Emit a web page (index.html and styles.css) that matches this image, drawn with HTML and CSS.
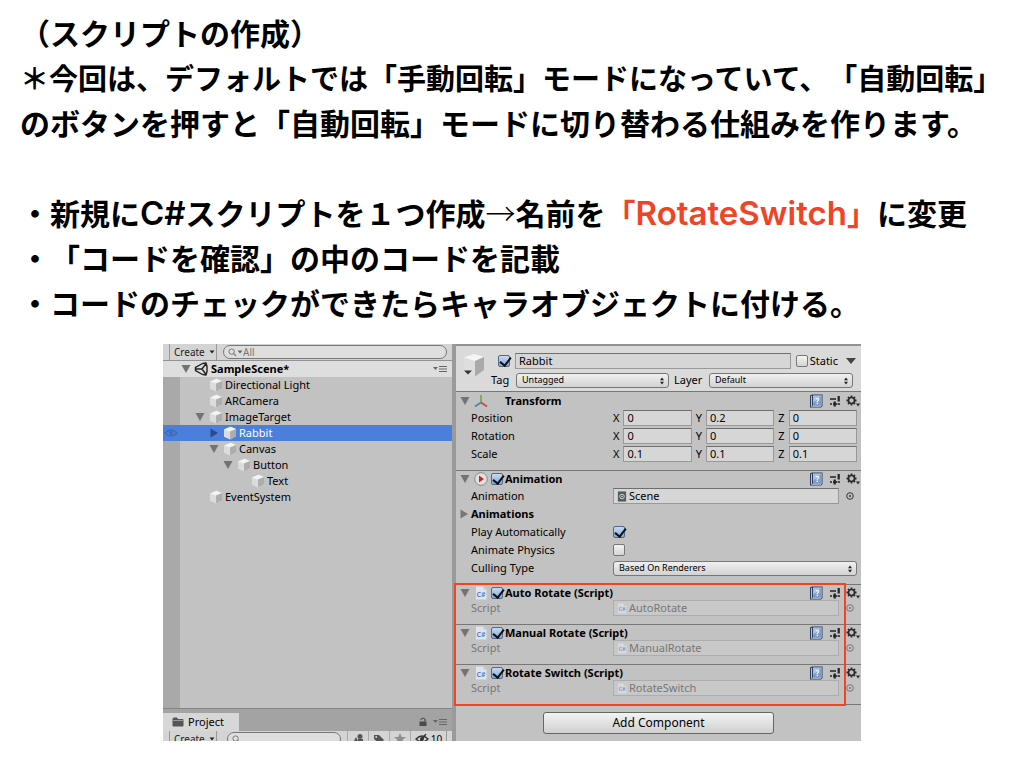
FILE: index.html
```html
<!DOCTYPE html>
<html lang="ja">
<head>
<meta charset="utf-8">
<title>スクリプトの作成</title>
<link rel="stylesheet" href="styles.css">
</head>
<body>
<svg class="defs" aria-hidden="true">
  <symbol id="cube" viewBox="0 0 14 14"><path d="M1 3.500 7.500.8 13 3v7.200L7.200 13.600 1 10.800z" fill="#dcdcdc"/><path d="M1 3.500 7.500.8 13 3 7 5.600z" fill="#f4f4f4"/><path d="M7 5.600 13 3v7.200l-5.800 3.400z" fill="#adadad"/></symbol>
  <symbol id="down" viewBox="0 0 10 10"><path d="M.5 1h9L5 9z" fill="#737373"/></symbol>
  <symbol id="right" viewBox="0 0 10 10"><path d="M1.500.5v9L9 5z" fill="currentColor"/></symbol>
  <symbol id="small-down" viewBox="0 0 6 4"><path d="M.5.500h5L3 3.500z" fill="currentColor"/></symbol>
  <symbol id="updown" viewBox="0 0 6 8"><path d="M3 .5 5 3.300H1zM3 7.500 5 4.700H1z" fill="#222"/></symbol>
  <symbol id="lens" viewBox="0 0 10 10"><circle cx="4" cy="4" r="3" fill="none" stroke="#777" stroke-width="1.100"/><path d="m6 6 3 3" stroke="#777" stroke-width="1.400"/></symbol>
  <symbol id="menu" viewBox="0 0 14 8"><path d="M0 2h5L2.500 5z" fill="#666"/><path d="M6 1.500h8M6 4h8M6 6.500h8" stroke="#666" stroke-width="1.200"/></symbol>
  <symbol id="unity" viewBox="0 0 14 14"><path d="m8.500 1.500-7 4v3l7 4M8.500 1.500l3.500-.5 1 3.500M8.500 12.500l3.500.5 1-3.500M1.500 7H8M8 7l4.500-6M8 7l4.500 6M13 4v6" fill="none" stroke="#222" stroke-width="1.400"/></symbol>
  <symbol id="book" viewBox="0 0 14 14"><path d="M1 1.500 3 .5h10.500v11.500L12 13.500H1z" fill="#2b3e60"/><path d="M4 1.500h9V12H4z" fill="#7e9bc6"/><path d="M4 1.500h9L4 9z" fill="#a9c0df"/><path d="M2.500 2v10.300h9.500" fill="none" stroke="#c9d6ea" stroke-width=".9"/><text x="8.500" y="9.800" class="book-mark">?</text></symbol>
  <symbol id="sliders" viewBox="0 0 12 12"><path d="M1 4h6M1 9h2M8.500 9H11" stroke="#222" stroke-width="1.600"/><path d="M9.700 1v5.500M5.700 6.500v5" stroke="#222" stroke-width="2.200"/><path d="M4 9h4" stroke="#222" stroke-width="1.600"/></symbol>
  <symbol id="gear" viewBox="0 0 14 12"><circle cx="5.500" cy="5.500" r="3" fill="none" stroke="#2b2b2b" stroke-width="1.700"/><path d="M5.500.5v2M5.500 8.500v2M.5 5.500h2M8.500 5.500h2M2 2l1.300 1.300M7.700 7.700 9 9M2 9l1.300-1.300M7.700 3.300 9 2" stroke="#2b2b2b" stroke-width="1.800"/><path d="M10 8.500h4L12 11.500z" fill="#2b2b2b"/></symbol>
  <symbol id="axes" viewBox="0 0 14 14"><path d="M7 8.500V1" stroke="#79a83c" stroke-width="1.700"/><path d="m7 8.500-6 4" stroke="#4388b5" stroke-width="1.900"/><path d="m7 8.500 6 4" stroke="#c64b3b" stroke-width="1.900"/></symbol>
  <symbol id="play" viewBox="0 0 14 14"><circle cx="7" cy="7" r="6.300" fill="#e0e0e0" stroke="#888"/><path d="m5 3.500 5 3.500-5 3.500z" fill="#c32920"/></symbol>
  <symbol id="script" viewBox="0 0 12 14"><path d="M1 .5h7.500l3 3v10H1z" fill="#e0e5eb"/><path d="M8.500.5v3h3z" fill="#c0c8d0"/><text x="6" y="10.500" class="script-mark">C#</text></symbol>
  <symbol id="target" viewBox="0 0 10 10"><circle cx="5" cy="5" r="3.300" fill="none" stroke="currentColor"/><circle cx="5" cy="5" r="1" fill="currentColor"/></symbol>
  <symbol id="clip" viewBox="0 0 10 12"><path d="M.5.500h9v11h-9z" fill="#4f5c60"/><circle cx="5" cy="6" r="2.500" fill="none" stroke="#d6dddd"/><circle cx="5" cy="6" r=".8" fill="#d6dddd"/></symbol>
  <symbol id="eye" viewBox="0 0 14 10"><path d="M1 5q6-6 12 0-6 6-12 0z" fill="none" stroke="currentColor" stroke-width="1.200"/><circle cx="7" cy="5" r="2" fill="currentColor"/></symbol>
</svg>

<main class="slide">
  <section class="notes">
    <p>（スクリプトの作成）</p>
    <p class="long">＊今回は、デフォルトでは「手動回転」モードになっていて、「自動回転」</p>
    <p>のボタンを押すと「自動回転」モードに切り替わる仕組みを作ります。</p>
    <p class="steps">・新規に<span class="latin">C#</span>スクリプトを１つ作成<span class="arrow">→</span>名前を<em>「<span class="latin">RotateSwitch</span>」</em>に変更</p>
    <p>・「コードを確認」の中のコードを記載</p>
    <p>・コードのチェックができたらキャラオブジェクトに付ける。</p>
  </section>

  <section class="editor">
    <div class="left">
      <div class="toolbar">
        <button class="create">Create <svg class="i6"><use href="#small-down"/></svg></button>
        <label class="search"><svg class="lens"><use href="#lens"/></svg><svg class="i6"><use href="#small-down"/></svg><input type="text" placeholder="All" aria-label="Search hierarchy"></label>
      </div>
      <div class="scene"><svg class="i10"><use href="#down"/></svg><svg class="i14"><use href="#unity"/></svg><b>SampleScene*</b><svg class="menu"><use href="#menu"/></svg></div>
      <ul class="tree">
        <li class="d1"><span class="fold"></span><svg class="i14"><use href="#cube"/></svg>Directional Light</li>
        <li class="d1"><span class="fold"></span><svg class="i14"><use href="#cube"/></svg>ARCamera</li>
        <li class="d1"><svg class="fold"><use href="#down"/></svg><svg class="i14"><use href="#cube"/></svg>ImageTarget</li>
        <li class="d2 selected"><svg class="eye"><use href="#eye"/></svg><svg class="fold"><use href="#right"/></svg><svg class="i14"><use href="#cube"/></svg>Rabbit</li>
        <li class="d2"><svg class="fold"><use href="#down"/></svg><svg class="i14"><use href="#cube"/></svg>Canvas</li>
        <li class="d3"><svg class="fold"><use href="#down"/></svg><svg class="i14"><use href="#cube"/></svg>Button</li>
        <li class="d4"><span class="fold"></span><svg class="i14"><use href="#cube"/></svg>Text</li>
        <li class="d1"><span class="fold"></span><svg class="i14"><use href="#cube"/></svg>EventSystem</li>
      </ul>
      <div class="tabs">
        <button class="tab"><svg class="folder" viewBox="0 0 12 10"><path d="M.5 2q0-1.500 1.500-1.500h3l1 1.500h4.500q1 0 1 1v5.500q0 1-1 1h-9q-1 0-1-1z" fill="#555"/><path d="M1 3.500h10" stroke="#aaa" stroke-width=".8"/></svg>Project</button>
        <svg class="lock" viewBox="0 0 8 10"><path d="M.5 4.500h7V9h-7z" fill="#4b4b4b"/><path d="M2 3V2.500Q4-.5 6 2.500v2" fill="none" stroke="#4b4b4b" stroke-width="1.200"/></svg>
        <svg class="menu"><use href="#menu"/></svg>
      </div>
      <div class="clip-bar"><div class="toolbar">
        <button class="create">Create <svg class="i6"><use href="#small-down"/></svg></button>
        <label class="search"><svg class="lens"><use href="#lens"/></svg><input type="text" aria-label="Search project"></label>
        <button class="tool" aria-label="Search by type"><svg class="i12" viewBox="0 0 12 12"><path d="m1 10 3-6 3 6zM6 6h5v5H6z" fill="#555"/><circle cx="8" cy="3.500" r="2.500" fill="#555"/></svg></button>
        <button class="tool" aria-label="Search by label"><svg class="i12" viewBox="0 0 12 12"><path d="M1 2h5l5 5-4 4-6-5z" fill="#555"/><circle cx="3.200" cy="4" r=".9" fill="#ddd"/></svg></button>
        <button class="tool" aria-label="Favorites"><svg class="i12" viewBox="0 0 12 12"><path d="m6 0 1.700 4H12L8.700 6.800 10 11 6 8.500 2 11l1.300-4.200L0 4h4.300z" fill="#909090"/></svg></button>
        <button class="tool count"><svg class="i14" viewBox="0 0 14 12"><path d="M1 6q6-6 12 0-6 6-12 0zM3 11l8-10" fill="none" stroke="#333" stroke-width="1.300"/><circle cx="7" cy="6" r="2" fill="#333"/></svg>10</button>
      </div></div>
    </div>

    <div class="inspector">
      <header class="object">
        <svg class="big-cube" viewBox="0 0 22 26"><path d="M1 4.500 11 1l10 3v13l-9 6.500L1 18z" fill="#dedede"/><path d="M1 4.500 11 1l10 3-9 4z" fill="#f5f5f5"/><path d="m12 8 9-4v13l-9 6.500z" fill="#aaa"/><path d="M1 17.500h8L5 21.500z" fill="#333"/></svg>
        <div class="object-rows">
          <div class="object-row first"><input type="checkbox" checked aria-label="Active"><input class="field name" type="text" value="Rabbit" aria-label="Name"><label class="static"><input type="checkbox">Static</label><svg class="static-arrow"><use href="#small-down"/></svg></div>
          <div class="object-row second"><label for="tag">Tag</label><span class="pick tag"><select id="tag"><option>Untagged</option></select><svg><use href="#updown"/></svg></span><label for="layer" class="layer-label">Layer</label><span class="pick layer"><select id="layer"><option>Default</option></select><svg><use href="#updown"/></svg></span></div>
        </div>
      </header>

      <section class="part transform">
        <h2><svg class="i10"><use href="#down"/></svg><svg class="i14"><use href="#axes"/></svg><span class="no-check"></span>Transform<span class="tools"><svg class="i14"><use href="#book"/></svg><svg class="i12"><use href="#sliders"/></svg><svg class="i14"><use href="#gear"/></svg></span></h2>
        <div class="row"><span class="label">Position</span><div class="vector"><label>X<input class="field" value="0"></label><label>Y<input class="field" value="0.2"></label><label>Z<input class="field" value="0"></label></div></div>
        <div class="row"><span class="label">Rotation</span><div class="vector"><label>X<input class="field" value="0"></label><label>Y<input class="field" value="0"></label><label>Z<input class="field" value="0"></label></div></div>
        <div class="row"><span class="label">Scale</span><div class="vector"><label>X<input class="field" value="0.1"></label><label>Y<input class="field" value="0.1"></label><label>Z<input class="field" value="0.1"></label></div></div>
      </section>

      <section class="part animation">
        <h2><svg class="i10"><use href="#down"/></svg><svg class="i14"><use href="#play"/></svg><input type="checkbox" checked aria-label="Animation enabled">Animation<span class="tools"><svg class="i14"><use href="#book"/></svg><svg class="i12"><use href="#sliders"/></svg><svg class="i14"><use href="#gear"/></svg></span></h2>
        <div class="row"><span class="label">Animation</span><button class="field ref"><svg class="asset"><use href="#clip"/></svg>Scene</button><svg class="target"><use href="#target"/></svg></div>
        <div class="row group"><svg class="i10"><use href="#right"/></svg><b>Animations</b></div>
        <div class="row"><label class="label" for="auto">Play Automatically</label><input id="auto" type="checkbox" checked></div>
        <div class="row"><label class="label" for="phys">Animate Physics</label><input id="phys" type="checkbox"></div>
        <div class="row"><label class="label" for="cull">Culling Type</label><span class="pick"><select id="cull"><option>Based On Renderers</option></select><svg><use href="#updown"/></svg></span></div>
      </section>

      <div class="scripts">
        <section class="part script">
          <h2><svg class="i10"><use href="#down"/></svg><svg class="i14"><use href="#script"/></svg><input type="checkbox" checked aria-label="Auto Rotate enabled">Auto Rotate (Script)<span class="tools"><svg class="i14"><use href="#book"/></svg><svg class="i12"><use href="#sliders"/></svg><svg class="i14"><use href="#gear"/></svg></span></h2>
          <div class="row"><span class="label">Script</span><button class="field ref" disabled><svg class="asset"><use href="#script"/></svg>AutoRotate</button><svg class="target"><use href="#target"/></svg></div>
        </section>
        <section class="part script">
          <h2><svg class="i10"><use href="#down"/></svg><svg class="i14"><use href="#script"/></svg><input type="checkbox" checked aria-label="Manual Rotate enabled">Manual Rotate (Script)<span class="tools"><svg class="i14"><use href="#book"/></svg><svg class="i12"><use href="#sliders"/></svg><svg class="i14"><use href="#gear"/></svg></span></h2>
          <div class="row"><span class="label">Script</span><button class="field ref" disabled><svg class="asset"><use href="#script"/></svg>ManualRotate</button><svg class="target"><use href="#target"/></svg></div>
        </section>
        <section class="part script">
          <h2><svg class="i10"><use href="#down"/></svg><svg class="i14"><use href="#script"/></svg><input type="checkbox" checked aria-label="Rotate Switch enabled">Rotate Switch (Script)<span class="tools"><svg class="i14"><use href="#book"/></svg><svg class="i12"><use href="#sliders"/></svg><svg class="i14"><use href="#gear"/></svg></span></h2>
          <div class="row"><span class="label">Script</span><button class="field ref" disabled><svg class="asset"><use href="#script"/></svg>RotateSwitch</button><svg class="target"><use href="#target"/></svg></div>
        </section>
        <div class="highlight"></div>
      </div>
      <footer class="add"><button>Add Component</button></footer>
    </div>
  </section>
</main>
</body>
</html>
```

FILE: styles.css
```css
* { box-sizing: border-box; }
body { margin: 0; background: #fff; color: #000; }
svg { flex: none; display: block; }
.defs { display: none; }
button, input, select { font: inherit; color: inherit; margin: 0; }

.slide { padding-top: 10px; }
.notes {
  padding-left: 20px;
  font: 700 30px/45px "Noto Sans CJK JP", sans-serif;
  text-spacing-trim: space-all;
  white-space: nowrap;
}
.notes p { margin: 0; height: 45px; }
.notes .long { font-size: 29px; }
.notes .steps { margin-top: 45px; }
.notes em { font-style: normal; color: #ee4427; }
.latin { font-family: Inter, sans-serif; font-size: 33px; font-weight: 600; line-height: 1; }
.arrow { font-weight: 300; }

.editor {
  margin: 19px 163px 0;
  display: grid;
  grid-template-columns: 289fr 409fr;
  font: 11px/16px "Noto Sans", sans-serif;
  background: #c2c2c2;
}
.i6 { width: 6px; height: 4px; }
.i10 { width: 10px; height: 10px; }
.i12 { width: 12px; height: 12px; }
.i14 { width: 14px; height: 14px; }
.book-mark { font: 700 8px "Noto Sans", sans-serif; fill: #fff; text-anchor: middle; }
.script-mark { font: 700 7px "Noto Sans", sans-serif; fill: #5d83cc; text-anchor: middle; }

.left { display: flex; flex-direction: column; min-width: 0; }
.toolbar {
  display: flex; align-items: stretch; height: 17px; padding: 0 5px 0 6px;
  background: #d4d4d4; border-bottom: 1px solid #929292; font-size: 10px;
}
.create {
  display: flex; align-items: center; gap: 4px; width: 48px; padding: 0 4px;
  background: none; border: solid #999; border-width: 0 1px; white-space: nowrap; color: #222;
}
.search {
  flex: 1; min-width: 0; display: flex; align-items: center; margin: 1px 0 1px 6px; padding-left: 4px;
  background: #dedede; border: 1px solid #777; border-radius: 8px; color: #666;
}
.search input { flex: 1; min-width: 0; width: 0; padding: 0; border: 0; background: none; height: 12px; }
.search input::placeholder { color: #777; }
.lens { width: 9px; height: 9px; }
.scene { display: flex; align-items: center; height: 16px; padding: 0 5px 0 18px; gap: 3px; background: #dedede; }
.menu { width: 14px; height: 8px; margin-left: auto; }
.tree {
  flex: 1; margin: 0; padding: 0; list-style: none;
  background: linear-gradient(to right, #a9a9a9 17px, #c2c2c2 17px);
  border-bottom: 1px solid #858585;
}
.tree li { position: relative; display: flex; align-items: center; height: 16px; gap: 2px; }
.fold { width: 10px; height: 10px; margin-right: 2px; flex: none; }
.d1 { padding-left: 32px; }
.d2 { padding-left: 46px; }
.d3 { padding-left: 60px; }
.d4 { padding-left: 74px; }
.selected { background: #4c7fdc; color: #fff; }
.selected .fold { color: #294a8c; }
.eye { position: absolute; left: 1px; top: 3px; width: 14px; height: 10px; color: #4169b5; }
.tabs { display: flex; align-items: center; height: 22px; padding: 4px 5px 0 0; background: #a3a3a3; }
.tab {
  display: flex; align-items: center; gap: 4px; height: 18px; width: 76px; padding: 0 9px;
  border: 0; background: #d7d7d7;
}
.folder { width: 12px; height: 10px; }
.lock { width: 8px; height: 10px; margin: 0 6px 0 auto; }
.tabs .menu { margin-left: 0; }
.clip-bar { height: 10px; overflow: hidden; }
.clip-bar .search { margin-left: 10px; margin-right: 6px; }
.tool {
  display: flex; align-items: center; justify-content: center; gap: 2px; width: 21px; padding: 0;
  border: 0; border-left: 1px solid #aaa; background: none;
}
.count { width: 37px; border-right: 1px solid #999; }

.inspector { min-width: 0; border-left: 4px solid #9a9a9a; }
.object { display: flex; height: 47px; padding: 7px 4px 0 7px; background: #dadada; border-top: 2px solid #929292; }
.big-cube { width: 22px; height: 26px; }
.object-rows { flex: 1; min-width: 0; display: flex; flex-direction: column; gap: 3px; }
.object-row { display: flex; align-items: center; height: 16px; }
.first { padding-left: 13px; }
.second { padding: 0 4px 0 6px; }
.name { flex: 1; margin: 0 5px; }
.static { display: flex; align-items: center; gap: 2px; }
.static-arrow { width: 12px; height: 8px; color: #444; margin-left: 7px; }
.second label { width: 25px; }
.second .layer-label { width: 35px; margin-left: 5px; }
.second .tag { flex: 153; }
.second .layer { flex: 144; }

input[type="checkbox"] {
  position: relative; appearance: none; flex: none; width: 12px; height: 12px;
  border: 1px solid #777; border-radius: 2px; background: linear-gradient(#f4f4f4, #d4d4d4);
}
input[type="checkbox"]:checked { background: linear-gradient(#c7d9f2, #84a8da); border-color: #52688c; }
input[type="checkbox"]:checked::after {
  content: ""; position: absolute; left: 3px; top: -1px; width: 5px; height: 9px;
  border: solid #111; border-width: 0 2px 2px 0; transform: rotate(38deg);
}
.field {
  min-width: 0; height: 16px; padding: 0 3px; line-height: 14px;
  background: #d6d6d6; border: 1px solid #999; border-top-color: #6f6f6f; border-radius: 0;
}
input.field { padding-bottom: 1px; }
.pick { position: relative; display: flex; flex: 1; min-width: 0; }
.pick select {
  appearance: none; width: 100%; height: 15px; padding: 0 5px; border: 1px solid #777; border-radius: 3px;
  background: linear-gradient(#f0f0f0, #d2d2d2); font-size: 9px; line-height: 12px;
}
.pick svg { position: absolute; right: 4px; top: 4px; width: 6px; height: 8px; }

.part { border-top: 1px solid #777; }
.part h2 { display: flex; align-items: center; height: 16px; margin: 0; padding: 0 1px 0 4px; font-size: 11px; line-height: 16px; gap: 3px; white-space: nowrap; }
.part h2 > .i10 { margin-right: 1px; }
.part h2 > input { margin-right: -1px; }
.no-check { width: 11px; }
.tools { margin-left: auto; display: flex; align-items: center; gap: 5px; }
.tools svg:nth-child(2) { margin-left: 1px; }
.row { display: flex; align-items: center; height: 18px; padding: 0 4px 0 15px; }
.label { width: 142px; flex: none; }
.vector { flex: 1; display: flex; gap: 4px; min-width: 0; }
.vector label { flex: 1; display: flex; align-items: center; min-width: 0; }
.vector .field { flex: 1; width: 0; margin-left: 4px; padding-left: 3px; }
.transform { padding: 1px 0 7px; }
.animation { padding-bottom: 7px; }
.ref { flex: 1; display: flex; align-items: center; gap: 2px; text-align: left; }
.asset { width: 10px; height: 11px; }
.target { width: 10px; height: 10px; margin: 0 2px 0 6px; color: #333; }
.group { padding-left: 3px; gap: 2px; color: #777; }
.group b { color: #000; }
.scripts { position: relative; border-bottom: 1px solid #777; }
.script { padding-bottom: 9px; }
.script .row { height: 14px; color: #777; }
.script .ref { background: #c8c8c8; border-color: #adadad; color: #777; }
.script .asset { opacity: .6; }
.script .target { color: #777; }
.highlight { position: absolute; left: -2px; right: 15px; top: -1px; bottom: -2px; border: 2px solid #ee4427; }
.add { padding: 7px 0; display: flex; justify-content: center; }
.add button { width: 57%; height: 22px; padding: 0; border: 1px solid #666; border-radius: 3px; background: linear-gradient(#f3f3f3, #d0d0d0); font-size: 12px; line-height: 16px; }
```
